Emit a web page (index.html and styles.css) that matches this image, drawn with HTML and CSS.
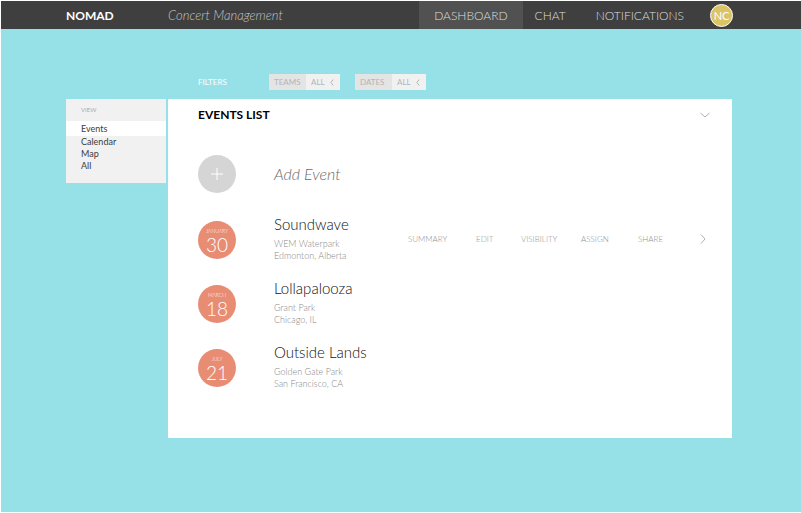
FILE: index.html
```html
<!DOCTYPE html>
<html lang="en">
<head>
<meta charset="utf-8">
<title>Nomad - Concert Management</title>
<meta name="viewport" content="width=device-width, initial-scale=1">
<link rel="stylesheet" href="styles.css">
</head>
<body>
<div class="app">
  <header class="topbar">
    <a class="brand" href="#">NOMAD</a>
    <span class="tagline">Concert Management</span>
    <nav class="nav">
      <a class="nav-link nav-link-active" href="#">DASHBOARD</a>
      <a class="nav-link" href="#">CHAT</a>
      <a class="nav-link nav-link-last" href="#">NOTIFICATIONS</a>
    </nav>
    <button class="avatar" type="button">NC</button>
  </header>

  <div class="page">
    <form class="filters">
      <span class="filters-title">FILTERS</span>
      <div class="filter">
        <label class="filter-label" for="teams">TEAMS</label>
        <div class="filter-value">
          <select id="teams" class="filter-select"><option>ALL</option></select>
          <svg class="filter-arrow" viewBox="0 0 4 7"><path d="M3.2 .6 .8 3.5l2.4 2.9"/></svg>
        </div>
      </div>
      <div class="filter">
        <label class="filter-label" for="dates">DATES</label>
        <div class="filter-value">
          <select id="dates" class="filter-select"><option>ALL</option></select>
          <svg class="filter-arrow" viewBox="0 0 4 7"><path d="M3.2 .6 .8 3.5l2.4 2.9"/></svg>
        </div>
      </div>
    </form>

    <div class="columns">
      <nav class="views">
        <h2 class="views-title">VIEW</h2>
        <a class="view view-active" href="#">Events</a>
        <a class="view" href="#">Calendar</a>
        <a class="view" href="#">Map</a>
        <a class="view" href="#">All</a>
      </nav>

      <main class="panel">
        <div class="panel-head">
          <h1 class="panel-title">EVENTS LIST</h1>
          <button class="icon-button" type="button" aria-label="Collapse">
            <svg class="chevron-down" viewBox="0 0 10 6"><path d="M.5 1 5 5l4.5-4"/></svg>
          </button>
        </div>

        <button class="add" type="button">
          <span class="disc disc-add"><svg class="plus" viewBox="0 0 12 12"><path d="M6 0v12M0 6h12"/></svg></span>
          <span class="add-text">Add Event</span>
        </button>

        <ul class="events">
          <li class="event">
            <time class="disc disc-date"><span class="month">JANUARY</span><span class="day">30</span></time>
            <div class="info">
              <h2 class="name">Soundwave</h2>
              <p class="place">WEM Waterpark<br>Edmonton, Alberta</p>
            </div>
            <div class="actions">
              <a class="action" href="#">SUMMARY</a>
              <a class="action" href="#">EDIT</a>
              <a class="action" href="#">VISIBILITY</a>
              <a class="action" href="#">ASSIGN</a>
              <a class="action" href="#">SHARE</a>
              <button class="icon-button" type="button" aria-label="Open">
                <svg class="chevron-right" viewBox="0 0 6 10"><path d="M1 .5 5 5 1 9.5"/></svg>
              </button>
            </div>
          </li>
          <li class="event">
            <time class="disc disc-date"><span class="month">MARCH</span><span class="day">18</span></time>
            <div class="info">
              <h2 class="name">Lollapalooza</h2>
              <p class="place">Grant Park<br>Chicago, IL</p>
            </div>
          </li>
          <li class="event">
            <time class="disc disc-date"><span class="month">JULY</span><span class="day">21</span></time>
            <div class="info">
              <h2 class="name">Outside Lands</h2>
              <p class="place">Golden Gate Park<br>San Francisco, CA</p>
            </div>
          </li>
        </ul>
      </main>
    </div>
  </div>
</div>
</body>
</html>
```
FILE: styles.css
```css
* {
  box-sizing: border-box;
}

body {
  margin: 0;
  padding: 1px 0 1px 1px;
  background: #fff;
  font-family: Lato, "Open Sans", sans-serif;
  font-weight: 300;
}

h1,
h2,
p,
ul {
  margin: 0;
  padding: 0;
}

a {
  color: inherit;
  text-decoration: none;
}

button,
select {
  margin: 0;
  padding: 0;
  border: 0;
  background: none;
  color: inherit;
  font: inherit;
}

svg {
  display: block;
  fill: none;
  stroke: currentColor;
}

.app {
  min-height: calc(100vh - 2px);
  background: #96e0e8;
}

.topbar {
  display: flex;
  align-items: center;
  height: 28px;
  padding: 0 68px 0 65px;
  background: #3f3f3f;
  color: #dedede;
  font-size: 12px;
}

.brand {
  width: 102px;
  color: #fff;
  font-weight: 700;
}

.tagline {
  color: #c4c4c4;
  font-size: 13px;
  font-style: italic;
}

.nav {
  display: flex;
  align-self: stretch;
  margin-left: auto;
}

.nav-link {
  display: flex;
  align-items: center;
  padding: 0 15px 0 12px;
}

.nav-link-active {
  padding: 0 15px;
  background: #515151;
}

.nav-link-last {
  padding: 0 26px 0 15px;
}

.avatar {
  width: 23px;
  height: 23px;
  border: 1px solid #fff;
  border-radius: 50%;
  background: #dbc465;
  color: #fff;
  font-size: 11px;
  font-weight: 400;
}

.page {
  padding: 45px 69px 48px 65px;
}

.filters {
  display: flex;
  align-items: center;
  padding-left: 132px;
  color: #b4b4b4;
  font-size: 8px;
  font-weight: 400;
}

.filters-title {
  width: 71px;
  color: #fff;
}

.filter {
  display: flex;
  height: 16px;
  margin-right: 15px;
  line-height: 16px;
}

.filter-label {
  width: 37px;
  padding-left: 5px;
  background: #e4e4e4;
}

.filter-value {
  display: flex;
  align-items: center;
  width: 34px;
  padding: 0 6px 0 5px;
  background: #f1f1f1;
}

.filter-select {
  flex: 1;
  min-width: 0;
  appearance: none;
}

.filter-arrow {
  width: 4px;
  height: 7px;
}

.columns {
  display: grid;
  grid-template-columns: 100px 1fr;
  gap: 2px;
  align-items: start;
  margin-top: 9px;
}

.views {
  padding-bottom: 11px;
  background: #f1f1f1;
  color: #3c3c3c;
  font-size: 9px;
  font-weight: 400;
}

.views-title {
  padding-left: 15px;
  color: #aaa;
  font-size: 6px;
  font-weight: 400;
  line-height: 22px;
}

.view {
  display: block;
  padding-left: 15px;
  line-height: 12px;
}

.view-active {
  padding: 2px 0 1px 15px;
  background: #fff;
}

.panel {
  padding: 8px 22px 48px 30px;
  background: #fff;
}

.panel-head {
  display: flex;
  align-items: center;
  justify-content: space-between;
}

.panel-title {
  color: #000;
  font-size: 12px;
  font-weight: 700;
  line-height: 16px;
}

.icon-button {
  color: #b0b0b0;
}

.chevron-down {
  width: 10px;
  height: 6px;
}

.chevron-right {
  width: 6px;
  height: 10px;
}

.add {
  display: flex;
  align-items: center;
  gap: 38px;
  margin-top: 32px;
}

.disc {
  display: flex;
  flex: none;
  flex-direction: column;
  align-items: center;
  justify-content: center;
  width: 38px;
  height: 38px;
  border-radius: 50%;
  color: #fff;
}

.disc-add {
  background: #d5d5d5;
}

.disc-date {
  margin-top: 6px;
  padding-top: 4px;
  background: #e88d73;
}

.plus {
  width: 12px;
  height: 12px;
}

.add-text {
  color: #6c6c6c;
  font-size: 16px;
  font-style: italic;
  line-height: 18px;
}

.month {
  font-size: 5px;
  line-height: 5px;
}

.day {
  font-size: 19px;
  line-height: 22px;
}

.events {
  display: grid;
  gap: 17px;
  margin-top: 22px;
  list-style: none;
}

.event {
  display: flex;
  gap: 38px;
}

.info {
  flex: 1;
}

.name {
  color: #111;
  font-size: 15px;
  font-weight: 300;
  line-height: 18px;
}

.place {
  margin-top: 5px;
  color: #888;
  font-size: 9px;
  line-height: 12px;
}

.actions {
  display: grid;
  grid-template-columns: 68px 45px 60px 57px 62px 10px;
  align-items: center;
  color: #909090;
  font-size: 8px;
}
```
